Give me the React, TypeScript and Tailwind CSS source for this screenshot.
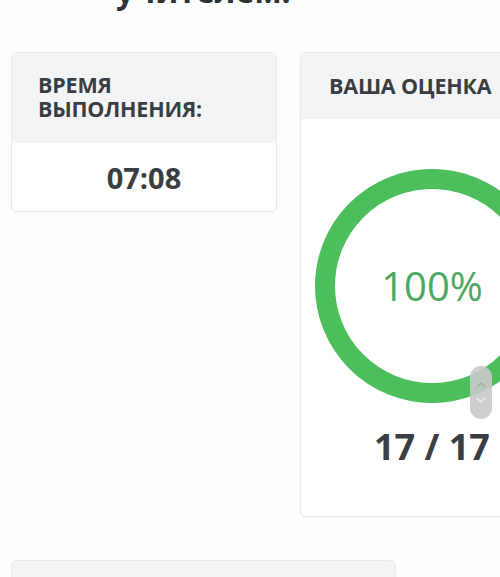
import React from "react";

export default function App() {
  return (
    <div
      className="relative w-[500px] h-[577px] overflow-hidden bg-[#fcfdfd] text-[#3a3e42]"
      style={{ fontFamily: '"Open Sans", "Noto Sans", sans-serif' }}
    >
      {/* cut-off heading */}
      <div className="h-[52px] pl-[116px] overflow-hidden">
        <div className="mt-[-29px] text-[32px] leading-[40px] font-bold text-[#2f3337]">
          учителем.
        </div>
      </div>

      <div className="flex items-start gap-[23px] pl-[11px]">
        {/* Time card */}
        <div className="w-[266px] shrink-0 rounded-[6px] border border-[#e6eaec] bg-white overflow-hidden shadow-[0_1px_2px_rgba(0,0,0,0.03)]">
          <div className="bg-[#f2f4f5] pl-[26px] pr-[10px] pt-[20px] h-[90px] text-[21.5px] leading-[24px] font-bold tracking-[-0.2px]">
            ВРЕМЯ
            <br />
            ВЫПОЛНЕНИЯ:
          </div>
          <div className="h-[68px] flex items-center justify-center text-[29px] font-bold leading-none">
            07:08
          </div>
        </div>

        {/* Score card */}
        <div className="w-[264px] shrink-0 rounded-[6px] border border-[#e6eaec] bg-white overflow-hidden shadow-[0_1px_2px_rgba(0,0,0,0.03)]">
          <div className="bg-[#f2f4f5] h-[66px] flex items-center pl-[28px] text-[21.5px] font-bold tracking-[-0.2px] whitespace-nowrap">
            ВАША ОЦЕНКА
          </div>
          <div className="flex flex-col items-center pt-[50px] pb-[51px]">
            <div className="relative w-[234px] h-[234px] flex items-center justify-center">
              <svg
                className="absolute inset-0"
                width="234"
                height="234"
                viewBox="0 0 234 234"
              >
                <circle
                  cx="117"
                  cy="117"
                  r="107"
                  fill="none"
                  stroke="#4cbf5c"
                  strokeWidth="20"
                />
              </svg>
              <span className="relative text-[40px] leading-none font-normal text-[#4aa860]">
                100%
              </span>
            </div>
            <div className="mt-[26px] text-[36px] leading-none font-bold">
              17 / 17
            </div>
          </div>
        </div>
      </div>

      {/* next card (cut off) */}
      <div className="ml-[11px] mt-[43px] w-[385px] h-[40px] rounded-t-[6px] border border-[#e6eaec] bg-[#f2f4f5]" />

      {/* scroll thumb overlay */}
      <div className="absolute left-[470px] top-[366px] w-[22px] h-[53px] rounded-full bg-[#c9c9c9]/90 flex flex-col items-center justify-center gap-[7px]">
        <svg width="12" height="8" viewBox="0 0 12 8">
          <path d="M2 6 L6 2 L10 6" fill="none" stroke="#aaaaaa" strokeWidth="1.5" />
        </svg>
        <svg width="12" height="8" viewBox="0 0 12 8">
          <path d="M2 2 L6 6 L10 2" fill="none" stroke="#eeeeee" strokeWidth="1.5" />
        </svg>
      </div>
    </div>
  );
}
